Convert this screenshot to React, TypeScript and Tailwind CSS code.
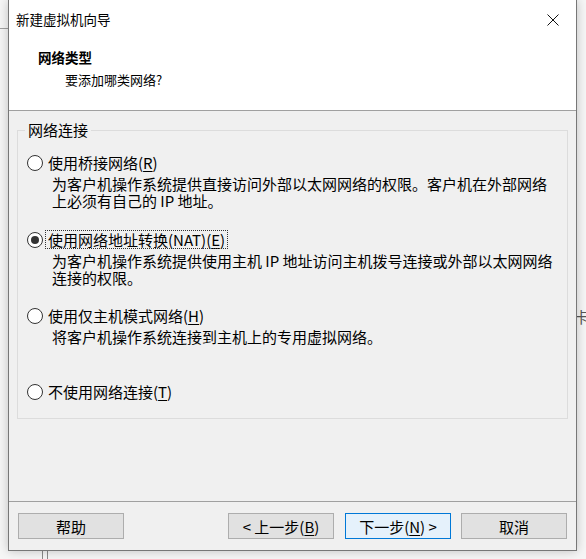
import React from "react";

const font = { fontFamily: '"Noto Sans CJK SC", "Noto Sans", sans-serif' };

function U({ children }: { children: React.ReactNode }) {
  return <span className="underline underline-offset-2 decoration-1">{children}</span>;
}

function Radio({ checked }: { checked?: boolean }) {
  return (
    <span
      className={
        "flex h-[16px] w-[16px] shrink-0 items-center justify-center rounded-full border bg-white " +
        (checked ? "border-[#333333]" : "border-[#333333]")
      }
    >
      {checked && <span className="h-[8px] w-[8px] rounded-full bg-[#333333]" />}
    </span>
  );
}

function Option({
  label,
  desc,
  checked,
  focus,
  className,
}: {
  label: React.ReactNode;
  desc?: string[];
  checked?: boolean;
  focus?: boolean;
  className?: string;
}) {
  return (
    <div className={"flex flex-col " + (className || "")}>
      <div className="flex h-[17px] items-center">
        <Radio checked={checked} />
        <span
          className={
            "ml-[3px] px-[2px] leading-[17px] " +
            (focus ? "outline outline-1 outline-dotted outline-[#333] outline-offset-0" : "")
          }
        >
          {label}
        </span>
      </div>
      {desc && (
        <div className="mt-[4px] pl-[25px] leading-[17px]">
          {desc.map((d, i) => (
            <div key={i}>{d}</div>
          ))}
        </div>
      )}
    </div>
  );
}

function Btn({
  children,
  primary,
}: {
  children: React.ReactNode;
  primary?: boolean;
}) {
  return (
    <div
      className={
        "flex h-[26px] w-[106px] items-center justify-center border text-[15px] leading-none " +
        (primary ? "border-[#0078d7] bg-[#e5f1fb]" : "border-[#adadad] bg-[#e1e1e1]")
      }
    >
      {children}
    </div>
  );
}

export default function App() {
  return (
    <div
      className="relative h-[559px] w-[586px] overflow-hidden bg-[#f6f6f6] text-black"
      style={font}
    >
      {/* background bits behind the dialog */}
      <div className="absolute left-0 top-[28px] h-[1px] w-[10px] bg-[#a0a0a0]" />
      <div className="absolute left-[42px] top-[540px] h-[20px] w-[6px] border-x border-[#8a8a8a]" />
      <div className="absolute left-[574px] top-[309px] text-[15px] leading-none text-[#555]">卡</div>

      <div className="relative ml-[8px] flex h-[551px] w-[569px] flex-col border-x border-b border-[#777777] bg-[#f0f0f0] shadow-[0_0_10px_rgba(0,0,0,0.22)]">
        {/* title bar */}
        <div className="flex h-[40px] items-center justify-between bg-white">
          <span className="pl-[7px] text-[13.5px] leading-none">新建虚拟机向导</span>
          <div className="flex h-[40px] w-[46px] items-center justify-center">
            <svg width="12" height="12" viewBox="0 0 12 12">
              <path d="M0.5 0.5 L11.5 11.5 M11.5 0.5 L0.5 11.5" stroke="#111" strokeWidth="1" />
            </svg>
          </div>
        </div>
        {/* header */}
        <div className="flex h-[70px] flex-col bg-white pl-[29px] pt-[8px]">
          <div className="text-[13.5px] font-bold leading-[18px]">网络类型</div>
          <div className="mt-[5px] pl-[27px] text-[13px] leading-[18px]">要添加哪类网络?</div>
        </div>
        <div className="h-[1px] bg-[#a0a0a0]" />

        {/* body */}
        <div className="flex flex-1 flex-col px-[8px] pt-[19px] text-[15px]">
          <div className="relative h-[289px] w-[551px] border border-[#dcdcdc] pl-[9px] pt-[23px]">
            <span className="absolute left-[7px] top-[-11px] bg-[#f0f0f0] px-[3px] leading-[20px]">
              网络连接
            </span>
            <Option
              label={
                <>
                  使用桥接网络(<U>R</U>)
                </>
              }
              desc={[
                "为客户机操作系统提供直接访问外部以太网网络的权限。客户机在外部网络",
                "上必须有自己的 IP 地址。",
              ]}
            />
            <Option
              className="mt-[22px]"
              checked
              focus
              label={
                <>
                  使用网络地址转换(NAT)(<U>E</U>)
                </>
              }
              desc={[
                "为客户机操作系统提供使用主机 IP 地址访问主机拨号连接或外部以太网网络",
                "连接的权限。",
              ]}
            />
            <Option
              className="mt-[21px]"
              label={
                <>
                  使用仅主机模式网络(<U>H</U>)
                </>
              }
              desc={["将客户机操作系统连接到主机上的专用虚拟网络。"]}
            />
            <Option
              className="mt-[38px]"
              label={
                <>
                  不使用网络连接(<U>T</U>)
                </>
              }
            />
          </div>
        </div>

        <div className="h-[1px] bg-[#a0a0a0]" />
        {/* buttons */}
        <div className="flex h-[48px] items-start px-[9px] pt-[11px]">
          <Btn>帮助</Btn>
          <div className="flex-1" />
          <Btn>
            &lt; 上一步(<U>B</U>)
          </Btn>
          <div className="w-[11px]" />
          <Btn primary>
            下一步(<U>N</U>) &gt;
          </Btn>
          <div className="w-[10px]" />
          <Btn>取消</Btn>
        </div>
      </div>
    </div>
  );
}
